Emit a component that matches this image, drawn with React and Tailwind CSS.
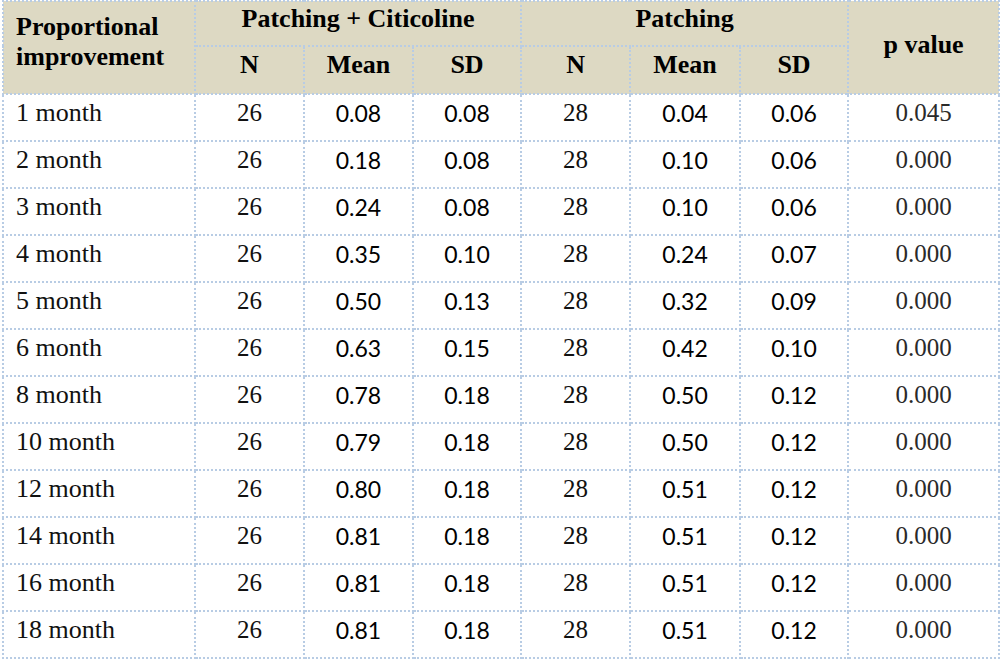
export default function App() {
  const rows = [
    ["1 month", "0.08", "0.08", "0.04", "0.06", "0.045"],
    ["2 month", "0.18", "0.08", "0.10", "0.06", "0.000"],
    ["3 month", "0.24", "0.08", "0.10", "0.06", "0.000"],
    ["4 month", "0.35", "0.10", "0.24", "0.07", "0.000"],
    ["5 month", "0.50", "0.13", "0.32", "0.09", "0.000"],
    ["6 month", "0.63", "0.15", "0.42", "0.10", "0.000"],
    ["8 month", "0.78", "0.18", "0.50", "0.12", "0.000"],
    ["10 month", "0.79", "0.18", "0.50", "0.12", "0.000"],
    ["12 month", "0.80", "0.18", "0.51", "0.12", "0.000"],
    ["14 month", "0.81", "0.18", "0.51", "0.12", "0.000"],
    ["16 month", "0.81", "0.18", "0.51", "0.12", "0.000"],
    ["18 month", "0.81", "0.18", "0.51", "0.12", "0.000"],
  ];
  const serif = "font-['Liberation_Serif',serif]";
  const sans = "font-['Lato',sans-serif]";
  const bd = "border-2 border-dotted border-[#b8cce4]";
  const th = `${bd} ${serif} font-bold text-[26px] leading-[30px] text-black text-center align-top`;
  const td = `${bd} h-[47px] align-top pt-[3px] leading-[30px] text-center`;
  return (
    <div className="w-[1000px] h-[660px] bg-white overflow-hidden pl-[2px]">
      <table className="table-fixed border-collapse w-[996px]">
        <colgroup>
          <col className="w-[192px]" />
          <col className="w-[109px]" />
          <col className="w-[109px]" />
          <col className="w-[108px]" />
          <col className="w-[109px]" />
          <col className="w-[110px]" />
          <col className="w-[108px]" />
          <col className="w-[151px]" />
        </colgroup>
        <thead className="bg-[#ddd9c3]">
          <tr className="h-[45px]">
            <th rowSpan={2} className={`${th} !text-left pl-[12px] pt-[10px]`}>
              Proportional improvement
            </th>
            <th colSpan={3} className={`${th} pt-[2px]`}>
              Patching + Citicoline
            </th>
            <th colSpan={3} className={`${th} pt-[2px]`}>
              Patching
            </th>
            <th rowSpan={2} className={`${th} !align-middle pb-[6px]`}>
              p value
            </th>
          </tr>
          <tr className="h-[48px]">
            <th className={`${th} pt-[3px]`}>N</th>
            <th className={`${th} pt-[3px]`}>Mean</th>
            <th className={`${th} pt-[3px]`}>SD</th>
            <th className={`${th} pt-[3px]`}>N</th>
            <th className={`${th} pt-[3px]`}>Mean</th>
            <th className={`${th} pt-[3px]`}>SD</th>
          </tr>
        </thead>
        <tbody>
          {rows.map((r) => (
            <tr key={r[0]}>
              <td className={`${td} ${serif} text-[26px] text-[#111] !text-left pl-[12px]`}>{r[0]}</td>
              <td className={`${td} ${serif} text-[25px] text-[#111]`}>26</td>
              <td className={`${td} ${sans} text-[23px] text-black`}>{r[1]}</td>
              <td className={`${td} ${sans} text-[23px] text-black`}>{r[2]}</td>
              <td className={`${td} ${serif} text-[25px] text-[#111]`}>28</td>
              <td className={`${td} ${sans} text-[23px] text-black`}>{r[3]}</td>
              <td className={`${td} ${sans} text-[23px] text-black`}>{r[4]}</td>
              <td className={`${td} ${serif} text-[25px] text-[#2a2a2a]`}>{r[5]}</td>
            </tr>
          ))}
        </tbody>
      </table>
    </div>
  );
}
